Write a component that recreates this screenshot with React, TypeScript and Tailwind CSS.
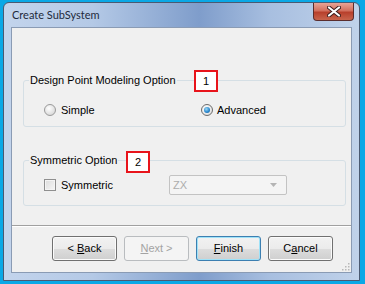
import React from "react";

function Marker({ n, className }: { n: string; className: string }) {
  return (
    <div
      className={`absolute flex h-[22px] w-[24px] items-center justify-center border-2 border-[#e8141b] bg-white text-[11px] text-black ${className}`}
    >
      {n}
    </div>
  );
}

function Btn({
  children,
  disabled,
  primary,
}: {
  children: React.ReactNode;
  disabled?: boolean;
  primary?: boolean;
}) {
  const border = disabled
    ? "border-[#b9bcbf]"
    : primary
      ? "border-[#3c7fb1] shadow-[inset_0_0_0_1px_#9fe2f8]"
      : "border-[#707070] shadow-[inset_0_0_0_1px_#fbfbfb]";
  const bg = disabled
    ? "bg-[#f4f4f4] text-[#a3a3a3]"
    : "bg-[linear-gradient(#f2f2f2_0%,#ebebeb_50%,#dddddd_51%,#cfcfcf_100%)] text-black";
  return (
    <div
      className={`flex h-[25px] w-[65px] items-center justify-center rounded-[3px] border ${border} ${bg}`}
    >
      {children}
    </div>
  );
}

export default function App() {
  return (
    <div
      className="h-[284px] w-[365px] bg-[#0aa8e6] pb-[3px] pl-[3px] pr-[5px] pt-[2px]"
      style={{ fontFamily: '"Liberation Sans", Arial, sans-serif' }}
    >
      <div className="flex h-full flex-col rounded-t-[6px] border border-[#4a5a72] bg-[linear-gradient(90deg,#c3d4ec_0%,#b4c9e6_25%,#7f9dcb_55%,#a8bfe0_75%,#c0d2ea_100%)] px-[7px] pb-[7px]">
        <div className="flex h-[24px] shrink-0 items-center justify-between">
          <span
            className="pl-[1px] pt-[1px] text-[11px] text-[#1e2a3c]"
            style={{ fontFamily: "Lato, 'Open Sans', sans-serif" }}
          >
            Create SubSystem
          </span>
          <div className="-mr-[2px] mb-[5px] flex h-[18px] w-[41px] items-center justify-center self-start rounded-b-[4px] border border-t-0 border-[#5a2d2d] bg-[linear-gradient(#e8a496_0%,#d2705e_45%,#b8402c_55%,#c8644c_100%)]">
            <svg width="14" height="11" viewBox="0 0 14 11">
              <path
                d="M2 1.5 L12 9.5 M12 1.5 L2 9.5"
                stroke="#3b1c1c"
                strokeWidth="4"
                strokeLinecap="round"
              />
              <path
                d="M2 1.5 L12 9.5 M12 1.5 L2 9.5"
                stroke="#ffffff"
                strokeWidth="2.2"
                strokeLinecap="round"
              />
            </svg>
          </div>
        </div>
        <div className="relative flex flex-1 flex-col border border-[#8a9bb4] bg-[#f0f0f0] text-[11px] text-black">
          <fieldset className="ml-[11px] mr-[5px] mt-[45px] h-[54px] rounded-[3px] border border-[#d5dfe5] px-[5px]">
            <legend className="px-[1px] leading-[14px]">Design Point Modeling Option</legend>
            <div className="mt-[15px] flex items-center">
              <div className="flex w-[172px] items-center">
                <div className="ml-[15px] h-[12px] w-[12px] rounded-full border border-[#9a9a9a] bg-[radial-gradient(circle_at_40%_35%,#ffffff_0%,#e6e6e6_50%,#cfcfcf_100%)]" />
                <span className="ml-[5px]">Simple</span>
              </div>
              <div className="flex h-[12px] w-[12px] items-center justify-center rounded-full border border-[#6c6c6c] bg-[radial-gradient(circle_at_40%_35%,#ffffff_0%,#e8e8e8_60%,#cfcfcf_100%)]">
                <div className="h-[6px] w-[6px] rounded-full bg-[radial-gradient(circle_at_40%_35%,#9fd9f4_0%,#2a8ad0_55%,#0d4f8a_100%)]" />
              </div>
              <span className="ml-[4px]">Advanced</span>
            </div>
          </fieldset>
          <fieldset className="ml-[11px] mr-[5px] mt-[26px] h-[53px] rounded-[3px] border border-[#d5dfe5] px-[5px]">
            <legend className="px-[1px] leading-[14px]">Symmetric Option</legend>
            <div className="mt-[8px] flex items-center">
              <div className="flex w-[140px] items-center">
                <div className="ml-[15px] h-[12px] w-[12px] border border-[#8f8f8f] bg-[linear-gradient(135deg,#dcdcdc,#f6f6f6)] shadow-[inset_0_0_0_1px_#f4f4f4]" />
                <span className="ml-[5px]">Symmetric</span>
              </div>
              <div className="flex h-[20px] w-[118px] items-center justify-between rounded-[2px] border border-[#c3c3c3] bg-[#f4f4f4] pl-[3px] pr-[9px] text-[#adadad]">
                <span>ZX</span>
                <svg width="7" height="4" viewBox="0 0 7 4">
                  <path d="M0 0 H7 L3.5 4 Z" fill="#b4b4b4" />
                </svg>
              </div>
            </div>
          </fieldset>
          <div className="mt-[19px] h-px bg-[#a0a0a0] shadow-[0_1px_0_#ffffff]" />
          <div className="ml-[40px] mt-[10px] flex gap-[7px]">
            <Btn>
              &lt; <span className="ml-[3px] underline">B</span>ack
            </Btn>
            <Btn disabled>
              <span className="underline">N</span>ext &gt;
            </Btn>
            <Btn primary>
              <span className="underline">F</span>inish
            </Btn>
            <Btn>
              C<span className="underline">a</span>ncel
            </Btn>
          </div>
          <svg className="absolute bottom-[1px] right-[1px]" width="9" height="9" viewBox="0 0 9 9">
            {[
              [7, 1],
              [7, 4],
              [4, 4],
              [7, 7],
              [4, 7],
              [1, 7],
            ].map(([x, y]) => (
              <rect key={`${x}-${y}`} x={x} y={y} width="1.5" height="1.5" fill="#b8b8b8" />
            ))}
          </svg>
          <Marker n="1" className="left-[182px] top-[42px]" />
          <Marker n="2" className="left-[114px] top-[123px]" />
        </div>
      </div>
    </div>
  );
}
